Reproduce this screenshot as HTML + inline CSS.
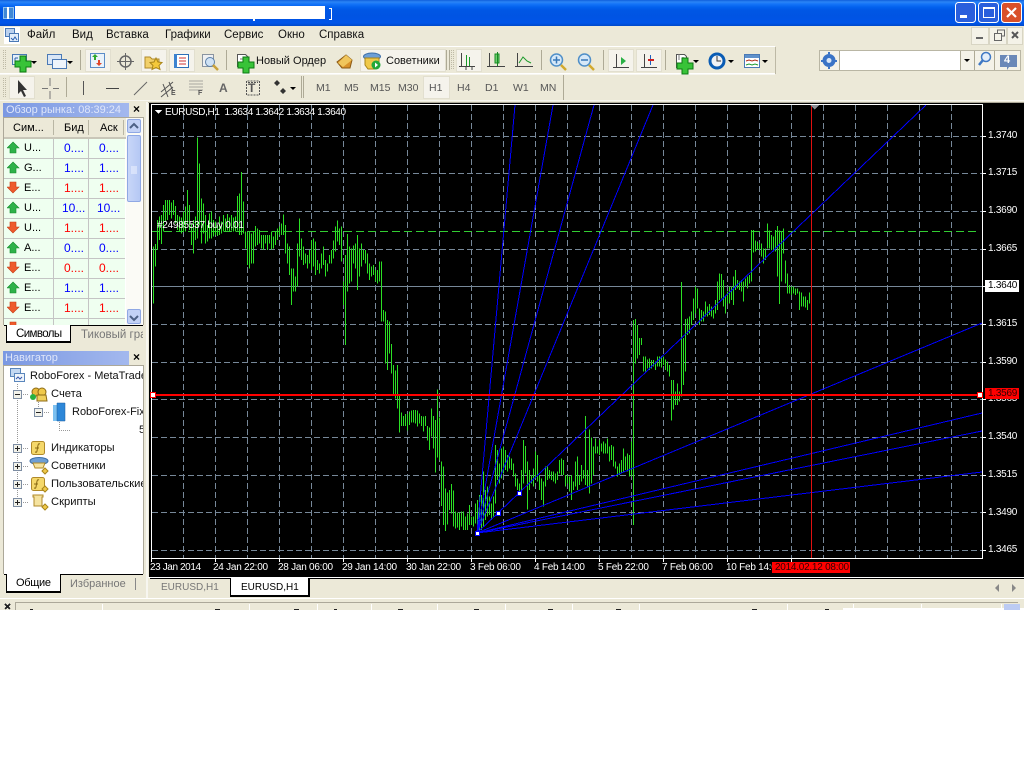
<!DOCTYPE html>
<html><head><meta charset="utf-8"><style>
html,body{margin:0;padding:0;background:#fff;width:1024px;height:768px;overflow:hidden}
body{position:relative;font:11px/13px "Liberation Sans","Noto Sans CJK SC",sans-serif;color:#000}
.a{position:absolute}
.t{position:absolute;white-space:nowrap}
.m{font-size:11.5px;color:#111;top:29px}
.f{font-size:10.5px;color:#555;top:82px}
.r{left:4px;width:121px;height:19px;background:#effff0;border-bottom:1px solid #c4c4c4}
.w{color:#fff;font-size:10px;line-height:12px;letter-spacing:-.25px}
.nv{font-size:11.2px;color:#111;left:51px}
</style></head><body>
<div class="a" style="left:0;top:26px;width:1024px;height:584px;background:#ece9d8"></div>
<div class="a" style="left:0;top:0;width:1024px;height:26px;background:linear-gradient(#0f5fdb 0,#2a85f5 2px,#1474f8 4px,#0362ee 7px,#0057e5 10px,#0054e3 16px,#0055e9 23px,#0049c8 26px)"></div>
<div class="a" style="left:15px;top:6px;width:310px;height:13px;background:#fff"></div>
<div class="a" style="left:3px;top:7px;width:11px;height:12px;background:#3f87d6;border:1px solid #8cc0ee;box-sizing:border-box"></div>
<div class="a" style="left:7px;top:7px;width:2px;height:12px;background:#fff"></div>
<div class="a" style="left:253px;top:17px;width:2px;height:4px;background:#fff"></div>
<div class="a" style="left:329px;top:8px;width:3px;height:12px;border:1px solid #fff;border-left:0;box-sizing:border-box"></div>

<svg class="a" style="left:0;top:0" width="1024" height="104" viewBox="0 0 1024 104">
<defs>
<path id="plus" d="M-3-8h6v5h5v6h-5v5h-6v-5h-5v-6h5z" fill="#38c338" stroke="#0d7a12"/>
<path id="dd" d="M0 0h6l-3 3z" fill="#000"/>
</defs>
<!-- window buttons -->
<g stroke="#fff" stroke-width="1">
<rect x="955.500" y="2.500" width="20" height="20" rx="3" fill="#2a5fdc"/>
<rect x="978.500" y="2.500" width="20" height="20" rx="3" fill="#2a5fdc"/>
<rect x="1001.500" y="2.500" width="20" height="20" rx="3" fill="#d9502a"/>
</g>
<rect x="960" y="15" width="7" height="3" fill="#fff"/>
<path d="M983.500 7.500h11v10h-11zM983.500 8.500h11" stroke="#fff" fill="none"/>
<path d="M1007 8l9 9M1016 8l-9 9" stroke="#fff" stroke-width="2.200"/>
<!-- menu icon -->
<rect x="4" y="27" width="16" height="17" fill="#fff"/>
<rect x="5.500" y="28.500" width="9" height="8" fill="#bcd2ef" stroke="#4a79b5"/>
<rect x="9.500" y="33.500" width="9" height="8" fill="#e3eefa" stroke="#4a79b5"/>
<path d="M11 38l2 2 2-3 2 3" stroke="#2a5fb0" fill="none"/>
<!-- mdi buttons -->
<rect x="971.500" y="27.500" width="17" height="17" fill="#f4f2e8" stroke="#d8d5c4"/>
<rect x="976" y="37" width="7" height="2" fill="#666"/>
<rect x="989.500" y="27.500" width="17" height="17" fill="#f4f2e8" stroke="#d8d5c4"/>
<path d="M994.500 33.500h7v7h-7zM997.500 33v-3h7v6h-3" stroke="#666" fill="none"/>
<rect x="1007.500" y="27.500" width="15" height="17" fill="#f4f2e8" stroke="#d8d5c4"/>
<path d="M1012 32l6 6M1018 32l-6 6" stroke="#555" stroke-width="2"/>
<!-- toolbar edges -->
<path d="M0 46.500h775M0 73.500h775" stroke="#fff"/>
<path d="M775.500 47v27" stroke="#bdb9a5"/>
<path d="M0 100.500h1024" stroke="#f7f6f0"/>
<path d="M0 74.500h775" stroke="#f7f6f0"/>
<path d="M3.500 50v20M5.500 50v20M3.500 78v20M5.500 78v20" stroke="#bdb9a5" stroke-dasharray="1 1"/>
<path d="M80.500 50v20M226.500 50v20M446.500 50v20M449.500 50v20M541.500 50v20M603.500 50v20M665.500 50v20M66.500 77v20M301.500 76v22M303.500 76v22M563.500 75v25" stroke="#aeaa96"/>
<path d="M451.500 50v20M453.500 50v20" stroke="#bdb9a5" stroke-dasharray="1 1"/>
<!-- pressed buttons -->
<g fill="#f5f3ec" stroke="#e2dfcf">
<rect x="85.500" y="49.500" width="25" height="22"/>
<rect x="141.500" y="49.500" width="25" height="22"/>
<rect x="169.500" y="49.500" width="25" height="22"/>
<rect x="360.500" y="49.500" width="85" height="22"/>
<rect x="456.500" y="49.500" width="25" height="22"/>
<rect x="608.500" y="49.500" width="25" height="22"/>
<rect x="636.500" y="49.500" width="25" height="22"/>
<rect x="9.500" y="76.500" width="25" height="22"/>
<rect x="423.500" y="76.500" width="26" height="22"/>
</g>
<!-- new chart -->
<rect x="12.500" y="54.500" width="14" height="10" fill="#e4eefa" stroke="#4a79b5"/>
<path d="M15 58h3M21 61h3M15 58v4M22 57v5" stroke="#2c60a8"/>
<use href="#plus" x="23" y="64"/>
<use href="#dd" x="31" y="61"/>
<!-- profiles -->
<rect x="47.500" y="54.500" width="14" height="10" fill="#d9e6f6" stroke="#4a79b5"/>
<rect x="52.500" y="59.500" width="14" height="9" fill="#eef4fb" stroke="#4a79b5"/>
<use href="#dd" x="67" y="61"/>
<!-- market watch btn -->
<rect x="90.500" y="53.500" width="14" height="14" fill="#eaf2fb" stroke="#5b8cc8"/>
<path d="M95 54l3 3h-2v3h-2v-3h-2z" fill="#2fa82f"/>
<path d="M99 66l3-3h-2v-3h-2v3h-2z" fill="#e0452a"/>
<!-- crosshair -->
<circle cx="125.500" cy="61.500" r="5.500" fill="none" stroke="#666" stroke-width="1.500"/>
<path d="M125.500 53v17M117 61.500h17" stroke="#666"/>
<!-- folder star -->
<path d="M145 57h5l2 2h7v9h-14z" fill="#f2d06a" stroke="#b08a2a"/>
<path d="M156 58l2 4 4 .5-3 3 1 4-4-2-4 2 1-4-3-3 4-.5z" fill="#f5c93a" stroke="#a98518"/>
<!-- navigator -->
<rect x="174.500" y="54.500" width="14" height="13" fill="#fff" stroke="#2c6fb8"/>
<rect x="174" y="54" width="3" height="14" fill="#3c82d0"/>
<path d="M179 58h7M179 61h7M179 64h7" stroke="#c33"/>
<!-- data window -->
<rect x="202.500" y="54.500" width="11" height="12" fill="#eef0f2" stroke="#8a94a0"/>
<circle cx="210" cy="62" r="4.500" fill="#cfe2f5" stroke="#5b7fa8"/>
<path d="M213 65l5 5" stroke="#c9a23a" stroke-width="2.500"/>
<!-- new order -->
<path d="M237.500 54.500h8l3 3v9h-11z" fill="#fff" stroke="#555"/>
<path d="M240 59h5M240 62h4" stroke="#777"/>
<use href="#plus" x="246" y="65"/>
<!-- book -->
<path d="M337 62l9-7 6 5-2 8-8 0z" fill="#d9922a" stroke="#8a5a14"/>
<path d="M346 55l6 5-9 7-5-4z" fill="#f0c65c"/>
<!-- experts -->
<ellipse cx="372" cy="56.500" rx="8.500" ry="3.500" fill="#6d9fd6" stroke="#3d6fa8"/>
<path d="M365 58h14v7l-4 4h-7l-3-4z" fill="#f0c94a" stroke="#a98518"/>
<circle cx="376" cy="65" r="4.500" fill="#23a83a"/>
<path d="M375 62.500l3 2.500-3 2.500z" fill="#fff"/>
<!-- chart types -->
<g stroke="#444" fill="none">
<path d="M461.500 53v14M459 66.500h16"/>
<path d="M466.500 55v11M469.500 57v9" stroke="#1a9a2a"/>
<path d="M466 67v3M472 67v3" />
<path d="M489.500 53v14M487 66.500h18"/>
<path d="M517.500 53v14M515 66.500h18"/>
<path d="M519 63l4-6 4 4 4 2" stroke="#1a9a2a"/>
</g>
<rect x="495" y="54" width="4" height="9" fill="#6fd06f" stroke="#168a22"/>
<path d="M497.500 52v14" stroke="#168a22"/>
<!-- zoom -->
<circle cx="556.500" cy="60" r="6" fill="#d6e8f8" stroke="#4f8fc8" stroke-width="1.500"/>
<path d="M553 60h7M556.500 56.500v7" stroke="#3878b8" stroke-width="1.500"/>
<path d="M561 65l5 5" stroke="#d2a92e" stroke-width="2.500"/>
<circle cx="584.500" cy="60" r="6" fill="#d6e8f8" stroke="#4f8fc8" stroke-width="1.500"/>
<path d="M581 60h7" stroke="#3878b8" stroke-width="1.500"/>
<path d="M589 65l5 5" stroke="#d2a92e" stroke-width="2.500"/>
<g stroke="#444" fill="none">
<path d="M616.500 54v14M613 67.500h16M644.500 54v14M641 67.500h16"/>
</g>
<path d="M621 57l5 4-5 4z" fill="#29b045"/>
<path d="M650.500 55v10" stroke="#2060c0"/><path d="M648 60h6" stroke="#d02020" stroke-width="2"/>
<!-- templates -->
<path d="M676.500 54.500h8l2 2v11h-10z" fill="#fff" stroke="#555"/>
<path d="M679 54v6M683 57v5" stroke="#777"/>
<use href="#plus" x="685" y="66"/>
<use href="#dd" x="693" y="60"/>
<!-- clock -->
<circle cx="717" cy="61" r="7" fill="#f0f2f5" stroke="#0a5cb4" stroke-width="3"/>
<path d="M717 56v5h4" stroke="#333" fill="none"/>
<use href="#dd" x="728" y="60"/>
<!-- indicators -->
<rect x="744.500" y="54.500" width="15" height="13" fill="#fff" stroke="#4a79b5"/>
<rect x="745" y="55" width="14" height="3" fill="#5f91cb"/>
<path d="M746 61l3-1 3 1 3-1 3 1" stroke="#b02d1a" fill="none"/>
<path d="M746 65l3-1 3 1 3-1 3 1" stroke="#1f9a2f" fill="none"/>
<use href="#dd" x="762" y="60"/>
<!-- search box -->
<rect x="819.500" y="50.500" width="201" height="20" fill="#f4f2e8" stroke="#b9b6a4"/>
<rect x="840" y="51" width="120" height="19" fill="#fff"/>
<path d="M839.500 51v19M960.500 51v19M974.500 51v19M994.500 51v19" stroke="#aeaa96"/>
<g fill="#3a73c6"><circle cx="829" cy="60.500" r="6.500"/><path d="M828 52h2v2h-2zM828 67h2v2h-2zM821 60h2v2h-2zM835 60h2v2h-2z"/></g>
<circle cx="829" cy="60.500" r="2.500" fill="#d9e6f6"/>
<use href="#dd" x="964" y="59"/>
<circle cx="986" cy="57" r="4.500" fill="#e4eefa" stroke="#3f78c4" stroke-width="1.500"/>
<path d="M983 60l-4 5" stroke="#3f78c4" stroke-width="2.500"/>
<path d="M1000 55h17v12h-8l-2 3v-3h-7z" fill="#6a88b8"/>
<!-- row 2 tools -->
<path d="M18 80v14l3-3 3 6 2-1-3-6h4z" fill="#333"/>
<path d="M50 78v8M50 91v8M42 88.500h6M53 88.500h6" stroke="#777"/>
<path d="M83.500 81v14" stroke="#555"/>
<path d="M106 88.500h13" stroke="#444"/>
<path d="M134 95l13-13" stroke="#666"/>
<path d="M161 92l12-10M161 97l12-10M163 84l5 13M169 82l4 9" stroke="#555" fill="none"/>
<path d="M189.500 81h14M189.500 84h14M189.500 87h14M189.500 90h14" stroke="#666" stroke-dasharray="1 1"/>
<path d="M248 82.500h10M246.500 81v14h13V81z" fill="none" stroke="#555" stroke-dasharray="2 1"/>
<path d="M274 83l3 3 3-3-3-3zM280 91l3 3 3-3-3-3z" fill="#333"/>
<use href="#dd" x="290" y="87"/>
</svg>

<span class="t m" style="left:27px">Файл</span>
<span class="t m" style="left:72px">Вид</span>
<span class="t m" style="left:106px">Вставка</span>
<span class="t m" style="left:165px">Графики</span>
<span class="t m" style="left:224px">Сервис</span>
<span class="t m" style="left:278px">Окно</span>
<span class="t m" style="left:319px">Справка</span>
<span class="t" style="left:256px;top:55px;color:#111">Новый Ордер</span>
<span class="t" style="left:386px;top:55px;color:#111">Советники</span>
<span class="t" style="left:219px;top:82px;font:bold 12px/13px 'Liberation Sans',sans-serif;color:#666">A</span>
<span class="t" style="left:248px;top:82px;font:bold 12px/13px 'Liberation Sans',sans-serif;color:#555">T</span>
<span class="t" style="left:171px;top:90px;font:bold 7px/8px 'Liberation Sans',sans-serif;color:#555">E</span>
<span class="t" style="left:198px;top:90px;font:bold 7px/8px 'Liberation Sans',sans-serif;color:#555">F</span>
<span class="t f" style="left:316px">M1</span><span class="t f" style="left:344px">M5</span><span class="t f" style="left:370px">M15</span><span class="t f" style="left:398px">M30</span><span class="t f" style="left:429px">H1</span><span class="t f" style="left:457px">H4</span><span class="t f" style="left:485px">D1</span><span class="t f" style="left:513px">W1</span><span class="t f" style="left:540px">MN</span>
<span class="t" style="left:1004px;top:54px;color:#fff;font:bold 11px/13px 'Liberation Sans',sans-serif">4</span>

<!-- Market watch -->
<div class="a" style="left:3px;top:103px;width:126px;height:15px;background:linear-gradient(90deg,#7b98e2,#a3b8ee)"></div>
<span class="t" style="left:6px;top:104px;color:#dfe6fa;font-size:11px">Обзор рынка: 08:39:24</span>
<span class="t" style="left:133px;top:102px;font:bold 12px/14px 'Liberation Sans',sans-serif">×</span>
<div class="a" style="left:3px;top:117px;width:141px;height:208px;background:#fff;border:1px solid #aca899;box-sizing:border-box;border-bottom:0"></div>
<div class="a" style="left:4px;top:118px;width:122px;height:19px;background:#ece9d8"></div>
<div class="a" style="left:4px;top:137px;width:122px;height:2px;background:#c9c6b8"></div>
<div class="a" style="left:53px;top:120px;width:1px;height:15px;background:#b9b6a4"></div>
<div class="a" style="left:88px;top:120px;width:1px;height:15px;background:#b9b6a4"></div>
<div class="a" style="left:123px;top:120px;width:1px;height:15px;background:#b9b6a4"></div>
<span class="t" style="left:13px;top:122px">Сим...</span><span class="t" style="left:64px;top:122px">Бид</span><span class="t" style="left:100px;top:122px">Аск</span>
<div class="a" id="mw" style="left:0;top:0">
<div class="a r" style="top:139px"></div><div class="a r" style="top:159px"></div><div class="a r" style="top:179px"></div><div class="a r" style="top:199px"></div><div class="a r" style="top:219px"></div><div class="a r" style="top:239px"></div><div class="a r" style="top:259px"></div><div class="a r" style="top:279px"></div><div class="a r" style="top:299px"></div><div class="a r" style="top:319px;height:6px;border:0"></div>
</div>
<div class="a" style="left:53px;top:139px;width:1px;height:186px;background:#c4c4c4"></div>
<div class="a" style="left:88px;top:139px;width:1px;height:186px;background:#c4c4c4"></div>
<svg class="a" style="left:7px;top:140px" width="14" height="186" viewBox="0 0 14 186">
<defs><path id="up" d="M6 1l6 6H9v5H3V7H0z" fill="#2fb24a" stroke="#138a2a" stroke-width=".6"/><path id="dn" d="M6 12L0 6h3V1h6v5h3z" fill="#ee5a2c" stroke="#c43a14" stroke-width=".6"/></defs>
<use href="#up" y="1"/><use href="#up" y="21"/><use href="#dn" y="41"/><use href="#up" y="61"/><use href="#dn" y="81"/><use href="#up" y="101"/><use href="#dn" y="121"/><use href="#up" y="141"/><use href="#dn" y="161"/><use href="#dn" y="181"/>
</svg>
<span class="t" style="left:24px;top:142px">U...</span><span class="t" style="left:24px;top:162px">G...</span><span class="t" style="left:24px;top:182px">E...</span><span class="t" style="left:24px;top:202px">U...</span><span class="t" style="left:24px;top:222px">U...</span><span class="t" style="left:24px;top:242px">A...</span><span class="t" style="left:24px;top:262px">E...</span><span class="t" style="left:24px;top:282px">E...</span><span class="t" style="left:24px;top:302px">E...</span>
<div style="color:#00f;font-size:12px">
<span class="t" style="left:64px;top:142px">0....</span><span class="t" style="left:99px;top:142px">0....</span>
<span class="t" style="left:64px;top:162px">1....</span><span class="t" style="left:99px;top:162px">1....</span>
<span class="t" style="left:64px;top:182px;color:#f00">1....</span><span class="t" style="left:99px;top:182px;color:#f00">1....</span>
<span class="t" style="left:62px;top:202px">10...</span><span class="t" style="left:97px;top:202px">10...</span>
<span class="t" style="left:64px;top:222px;color:#f00">1....</span><span class="t" style="left:99px;top:222px;color:#f00">1....</span>
<span class="t" style="left:64px;top:242px">0....</span><span class="t" style="left:99px;top:242px">0....</span>
<span class="t" style="left:64px;top:262px;color:#f00">0....</span><span class="t" style="left:99px;top:262px;color:#f00">0....</span>
<span class="t" style="left:64px;top:282px">1....</span><span class="t" style="left:99px;top:282px">1....</span>
<span class="t" style="left:64px;top:302px;color:#f00">1....</span><span class="t" style="left:99px;top:302px;color:#f00">1....</span>
</div>
<div class="a" style="left:126px;top:118px;width:16px;height:207px;background:#fbfbf6"></div>
<div class="a" style="left:127px;top:119px;width:14px;height:14px;background:#c3d2f6;border:1px solid #8fa8e4;border-radius:2px;box-sizing:border-box"></div>
<div class="a" style="left:127px;top:135px;width:14px;height:67px;background:linear-gradient(90deg,#c8d6f8,#b5c8f4);border:1px solid #8fa8e4;border-radius:2px;box-sizing:border-box"></div>
<div class="a" style="left:127px;top:309px;width:14px;height:15px;background:#c3d2f6;border:1px solid #8fa8e4;border-radius:2px;box-sizing:border-box"></div>
<svg class="a" style="left:127px;top:119px" width="14" height="206" viewBox="0 0 14 206"><path d="M3 9l4-4 4 4M3 197l4 4 4-4" stroke="#4d6185" stroke-width="2" fill="none"/><path d="M4 48h6M4 50h6M4 52h6M4 54h6" stroke="#f0f4ff"/></svg>
<div class="a" style="left:3px;top:325px;width:141px;height:19px;background:#ece9d8"></div>
<div class="a" style="left:4px;top:325px;width:139px;height:1px;background:#000"></div>
<div class="a" style="left:6px;top:325px;width:65px;height:18px;background:#fff;border:1px solid #000;border-top:0;border-bottom-width:2px;box-sizing:border-box"></div>
<span class="t" style="left:16px;top:328px;font-size:11.5px;letter-spacing:-.6px">Символы</span>
<span class="t" style="left:81px;top:329px;color:#777;font-size:11.5px;width:62px;overflow:hidden">Тиковый гра</span>

<!-- Navigator -->
<div class="a" style="left:3px;top:351px;width:126px;height:14px;background:linear-gradient(90deg,#7b98e2,#a3b8ee)"></div>
<span class="t" style="left:5px;top:352px;color:#dfe6fa;font-size:11px">Навигатор</span>
<span class="t" style="left:133px;top:350px;font:bold 12px/14px 'Liberation Sans',sans-serif">×</span>
<div class="a" style="left:3px;top:365px;width:141px;height:209px;background:#fff;border:1px solid #aca899;border-bottom:0;box-sizing:border-box"></div>
<span class="t nv" style="left:30px;top:370px;width:113px;overflow:hidden;font-size:11px">RoboForex - MetaTrader</span>
<span class="t nv" style="top:388px">Счета</span>
<span class="t nv" style="left:72px;top:406px;width:71px;overflow:hidden;font-size:11px">RoboForex-Fix</span>
<span class="t nv" style="left:139px;top:424px;width:4px;overflow:hidden">5</span>
<span class="t nv" style="top:442px">Индикаторы</span>
<span class="t nv" style="top:460px">Советники</span>
<span class="t nv" style="top:478px;width:92px;overflow:hidden">Пользовательские</span>
<span class="t nv" style="top:496px">Скрипты</span>
<svg class="a" style="left:0;top:360px" width="70" height="160" viewBox="0 360 70 160">
<path d="M17.500 384v118M23 394.500h6M23 448.500h6M23 466.500h6M23 484.500h6M23 502.500h6M38.500 400v7M44 412.500h6M59.500 420v10.500h11" stroke="#999" stroke-dasharray="1 1" fill="none"/>
<rect x="10.500" y="368.500" width="10" height="8" fill="#c3d8f2" stroke="#5a86bc"/>
<rect x="14.500" y="373.500" width="10" height="8" fill="#eef4fb" stroke="#5a86bc"/>
<path d="M16 379l2-2 2 2 2-2" stroke="#35a" fill="none"/>
<g fill="#f2f2ea" stroke="#7d8da3">
<rect x="13.500" y="390.500" width="8" height="8"/><rect x="34.500" y="408.500" width="8" height="8"/><rect x="13.500" y="444.500" width="8" height="8"/><rect x="13.500" y="462.500" width="8" height="8"/><rect x="13.500" y="480.500" width="8" height="8"/><rect x="13.500" y="498.500" width="8" height="8"/>
</g>
<path d="M15 394.500h5M36 412.500h5M15 448.500h5M15 466.500h5M15 484.500h5M15 502.500h5M17.500 446v5M17.500 464v5M17.500 482v5M17.500 500v5" stroke="#222"/>
<circle cx="36" cy="392" r="4" fill="#e8b83a" stroke="#8c6a14"/><circle cx="42" cy="392" r="4" fill="#f0c94a" stroke="#8c6a14"/>
<circle cx="33" cy="397" r="3" fill="#27b040"/><path d="M37 395h9l1 6h-10z" fill="#f0cf5a" stroke="#8c6a14"/>
<path d="M53 405h5v16h-5z" fill="#7cc0f0"/><path d="M57 403h8v18h-8z" fill="#2d87d8" stroke="#1d5fa0" stroke-width=".5"/>
<g fill="#f5d86a" stroke="#b08a2a"><rect x="31.500" y="441.500" width="13" height="13" rx="2"/><rect x="31.500" y="477.500" width="13" height="13" rx="2"/></g>
<path d="M40 444c-2-1-2 1-3 7-.5 2-1 1-2 1M35 448h4M39 480c-2-1-2 1-3 7-.5 2-1 1-2 1M34 484h4" stroke="#8a6a14" fill="none"/>
<ellipse cx="39" cy="461" rx="9" ry="3.500" fill="#6d9fd6" stroke="#3d6fa8"/>
<path d="M33 463h12l-2 5h-8z" fill="#f5e3a0" stroke="#b08a2a"/>
<path d="M45 468l3 3-3 3-3-3zM45 486l3 3-3 3-3-3zM45 504l3 3-3 3-3-3z" fill="#f0c94a" stroke="#a98518"/>
<path d="M33 495h10v2h-1v9h-8v-9h-1z" fill="#f5e3a0" stroke="#b08a2a"/>
</svg>
<div class="a" style="left:4px;top:574px;width:139px;height:1px;background:#000"></div>
<div class="a" style="left:6px;top:574px;width:55px;height:19px;background:#fff;border:1px solid #000;border-top:0;border-bottom-width:2px;box-sizing:border-box"></div>
<span class="t" style="left:16px;top:577px;font-size:11px;letter-spacing:-.3px">Общие</span>
<span class="t" style="left:70px;top:578px;color:#777;font-size:11px">Избранное</span>
<div class="a" style="left:135px;top:578px;width:1px;height:12px;background:#888"></div>
<div class="a" style="left:146px;top:102px;width:2px;height:496px;background:#f7f6f0"></div>

<!-- Chart -->
<div class="a" style="left:149px;top:102px;width:875px;height:475px;background:#000"></div>
<div class="a" style="left:148px;top:102px;width:876px;height:1px;background:#aca899"></div>
<svg class="a" style="left:150px;top:103px" width="874" height="474" viewBox="150 103 874 474" shape-rendering="crispEdges">
<defs><clipPath id="cp"><rect x="152" y="105" width="830" height="453"/></clipPath></defs>
<g clip-path="url(#cp)" fill="none">
<path stroke="#778899" stroke-dasharray="6 3" d="M152 136.500H982M152 173.500H982M152 211.500H982M152 249.500H982M152 324.500H982M152 362.500H982M152 399.500H982M152 437.500H982M152 475.500H982M152 512.500H982M152 550.500H982M183.500 105V558M215.500 105V558M247.500 105V558M279.500 105V558M311.500 105V558M343.500 105V558M375.500 105V558M407.500 105V558M439.500 105V558M471.500 105V558M503.500 105V558M535.500 105V558M567.500 105V558M599.500 105V558M631.500 105V558M663.500 105V558M695.500 105V558M727.500 105V558M759.500 105V558M791.500 105V558M823.500 105V558M855.500 105V558M887.500 105V558M919.500 105V558M951.500 105V558"/>
<path stroke="#778899" d="M152 286.500H982"/>
<path stroke="#32cd32" stroke-dasharray="8 4" d="M152 231.500H977"/>
<g stroke="#2be024" stroke-width="3" shape-rendering="crispEdges">
<path transform="translate(150.170 100) scale(.33333)" d="M4 567V620M10 440V610M16 432V500M22 360V450M28 350V420M34 345V432M40 315V395M46 300V365M52 300V360M58 300V345M64 308V355M70 300V345M76 318V370M82 345V390M88 350V395M94 352V400M100 335V395M106 320V395M112 270V370M118 315V390M124 370V435M130 360V460M136 350V420M142 112V415M148 190V375M154 295V430M160 310V400M166 345V430M172 375V425M178 340V415M184 335V415M190 360V410M196 365V405M202 375V408M208 350V405M214 365V400M220 345V395M226 355V395M232 342V392M238 352V395M244 345V392M250 352V395M256 350V395M262 288V392M268 280V405M274 216V405M280 305V400M286 395V445M292 395V495M298 395V505M304 400V490M310 395V490M316 378V440M322 385V435M328 390V430M334 405V445M340 405V450M346 405V430M352 405V450M358 405V430M364 395V448M370 410V445M376 395V435M382 385V420M388 380V405M394 370V405M400 343V405M406 375V460M412 430V490M418 440V525M424 505V615M430 505V575M436 530V575M442 430V560M448 355V470M454 415V480M460 440V495M466 460V490M472 465V505M478 450V490M484 420V510M490 415V500M496 425V525M502 480V510M508 490V520M514 460V505M520 440V495M526 480V530M532 490V515M538 465V490M544 450V490M550 422V475M556 380V455M562 362V425M568 385V435M574 380V485M580 545V615M586 465V735M592 402V575M598 440V550M604 445V545M610 437V490M616 430V505M622 405V570M628 445V530M634 430V500M640 450V480M646 450V490M652 460V520M658 490V540M664 500V530M670 495V525M676 510V545M682 510V550M688 485V545M694 485V665"/>
<path transform="translate(150.170 340) scale(.33333)" d="M700 -90V-55M706 -85V70M712 -60V90M718 -55V40M724 12V100M730 75V165M736 92V175M742 75V205M748 165V278M754 218V258M760 228V258M766 222V258M772 222V272M778 215V255M784 212V248M790 210V248M796 210V250M802 212V260M808 220V250M814 228V258M820 230V275M826 228V258M832 258V302M838 262V330M844 205V290M850 228V325M856 240V398M862 148V352M868 232V360M874 365V498M880 380V555M886 445V573M892 458V553M898 450V510"/>
<path transform="translate(450.170 340) scale(.33333)" d="M4 432V520M10 452V560M16 515V565M22 518V563M28 518V570M34 515V560M40 515V570M46 530V570M52 520V570M58 495V555M64 530V555M70 530V560M76 490V550M82 480V580M88 465V580M94 465V570M100 395V560M106 450V540M112 440V530M118 470V525M124 490V540M130 470V530M136 315V490M142 330V420M148 370V430M154 325V415M160 320V400M166 330V390M172 345V395M178 350V385M184 355V390M190 370V410M196 400V440M202 415V450M208 430V460M214 390V460M220 300V430M226 318V400M232 365V508M238 390V450M244 405V430M250 385V440M256 335V415M262 345V425M268 405V450M274 415V480M280 425V500M286 380V440M292 380V420M298 390V415M304 395V420M310 395V425M316 400V430M322 395V420M328 360V400M334 355V405M340 360V405M346 405V440M352 405V430M358 410V455M364 405V480M370 425V450M376 365V440M382 350V450M388 405V435M394 375V425M400 390V415M406 228V435M412 390V440M418 268V460M424 292V430M430 320V405M436 295V340M442 320V340M448 300V345M454 310V335M460 305V340M466 310V340M472 295V340M478 320V365M484 315V360M490 320V380M496 365V385M502 380V410M508 370V405M514 360V400M520 325V395M526 350V390M532 340V395M538 345V410M544 305V410M550 -60V555M556 -63V70M562 -45V55M568 -6V45M574 -6V15M580 50V95M586 50V95M592 58V85M598 55V90M604 60V85M610 60V80M616 65V90M622 50V80M628 50V80M634 48V82M640 50V75M646 58V90M652 65V95M658 75V110M664 120V242M670 120V208M676 155V195M682 130V195M688 155V185M694 -174V170M700 -6V135M706 -63V95"/>
<path transform="translate(624.170 100) scale(.33333)" d="M190 655V705M196 650V700M202 635V675M208 595V660M214 560V640M220 565V625M226 625V675M232 630V665M238 635V665M244 605V650M250 620V650M256 612V645M262 620V650M268 630V655M274 600V640M280 545V630M286 520V600M292 522V595M298 540V620M304 590V640M310 575V610M316 560V610M322 560V600M328 530V615M334 510V570M340 540V565M346 545V570M352 540V575M358 545V605M364 535V560M370 530V565M376 525V550M382 390V545M388 390V458M394 422V455M400 425V450M406 430V450M412 430V470M418 445V490M424 445V480M430 370V445M436 392V445M442 405V450M448 410V455M454 390V455M460 378V530M466 392V612M472 395V545M478 385V460M484 482V550M490 520V580M496 555V580M502 560V585M508 560V580M514 565V585M520 565V580M526 575V630M532 578V620M538 590V620M544 590V622M550 600V630M556 578V610"/>
</g>
<path stroke="#0000ff" d="M477 533L515 105M477 533L553 105M477 533L594 105M477 533L653 105M477 533L926 105M477 533L982 323M477 533L982 413M477 533L982 431M477 533L982 472"/>
<path stroke="#e01010" d="M811.500 105V558"/>
<path stroke="#f00" stroke-width="2" d="M152 395H982"/>
</g>
<path d="M810 105h9l-4.500 4.500z" fill="#8a8f96"/>
<path d="M151.500 104.500H982.500V558.500H151.500Z" fill="none" stroke="#fff"/>
<path stroke="#fff" d="M983 136.500h3M983 173.500h3M983 211.500h3M983 249.500h3M983 286.500h3M983 324.500h3M983 362.500h3M983 399.500h3M983 437.500h3M983 475.500h3M983 512.500h3M983 550.500h3M151.500 559v3M215.500 559v3M279.500 559v3M343.500 559v3M407.500 559v3M471.500 559v3M535.500 559v3M599.500 559v3M663.500 559v3M727.500 559v3M791.500 559v3"/>
<g fill="#fff"><rect x="150.500" y="392.500" width="5" height="5" stroke="#f00"/><rect x="977.500" y="392.500" width="5" height="5" stroke="#f00"/><rect x="475.500" y="531.500" width="4" height="4" stroke="#00f"/><rect x="496.500" y="511.500" width="4" height="4" stroke="#00f"/><rect x="517.500" y="491.500" width="4" height="4" stroke="#00f"/></g>
<path d="M155 110h7l-3.500 4z" fill="#fff"/>
</svg>
<span class="t w" style="left:165px;top:107px;letter-spacing:-.35px">EURUSD,H1&nbsp; 1.3634 1.3642 1.3634 1.3640</span>
<span class="t w" style="left:157px;top:220px">#24985537 buy 0.01</span>
<span class="t w" style="left:988px;top:130px">1.3740</span><span class="t w" style="left:988px;top:167px">1.3715</span><span class="t w" style="left:988px;top:205px">1.3690</span><span class="t w" style="left:988px;top:243px">1.3665</span><span class="t w" style="left:988px;top:318px">1.3615</span><span class="t w" style="left:988px;top:356px">1.3590</span><span class="t w" style="left:988px;top:431px">1.3540</span><span class="t w" style="left:988px;top:469px">1.3515</span><span class="t w" style="left:988px;top:507px">1.3490</span><span class="t w" style="left:988px;top:544px">1.3465</span>
<span class="t w" style="left:988px;top:393px">1.3565</span>
<div class="a" style="left:985px;top:280px;width:34px;height:12px;background:#fff"></div><span class="t w" style="left:988px;top:280px;color:#000">1.3640</span>
<div class="a" style="left:985px;top:388px;width:34px;height:11px;background:#f00"></div><span class="t w" style="left:988px;top:388px;color:#300">1.3569</span>
<span class="t w" style="left:150px;top:562px;letter-spacing:-.4px">23 Jan 2014</span><span class="t w" style="left:213px;top:562px">24 Jan 22:00</span><span class="t w" style="left:278px;top:562px">28 Jan 06:00</span><span class="t w" style="left:342px;top:562px">29 Jan 14:00</span><span class="t w" style="left:406px;top:562px">30 Jan 22:00</span><span class="t w" style="left:470px;top:562px">3 Feb 06:00</span><span class="t w" style="left:534px;top:562px">4 Feb 14:00</span><span class="t w" style="left:598px;top:562px">5 Feb 22:00</span><span class="t w" style="left:662px;top:562px">7 Feb 06:00</span><span class="t w" style="left:726px;top:562px">10 Feb 14:00</span>
<div class="a" style="left:772px;top:562px;width:78px;height:11px;background:#f00"></div><span class="t w" style="left:775px;top:562px;color:#300">2014.02.12 08:00</span>

<!-- chart tabs -->
<div class="a" style="left:148px;top:577px;width:876px;height:1px;background:#fff"></div>
<div class="a" style="left:150px;top:578px;width:874px;height:1px;background:#000"></div>
<div class="a" style="left:230px;top:578px;width:80px;height:19px;background:#fff;border:1px solid #000;border-top:0;border-bottom-width:2px;border-right-width:2px;box-sizing:border-box"></div>
<span class="t" style="left:161px;top:581px;color:#777;font-size:10px">EURUSD,H1</span>
<span class="t" style="left:241px;top:581px;font-size:10px">EURUSD,H1</span>
<svg class="a" style="left:990px;top:582px" width="30" height="12" viewBox="0 0 30 12"><path d="M9 2v8l-4-4zM22 2v8l4-4z" fill="#888"/></svg>

<!-- toolbox strip -->
<div class="a" style="left:0;top:598px;width:1024px;height:1px;background:#fff"></div>
<div class="a" style="left:15px;top:602px;width:1003px;height:1px;background:#aca899"></div>
<div class="a" style="left:15px;top:602px;width:1px;height:8px;background:#aca899"></div>
<svg class="a" style="left:0;top:602px" width="1024" height="10" viewBox="0 602 1024 10" shape-rendering="crispEdges">
<path stroke="#fff" d="M102.500 604v6M249.500 604v6M317.500 604v6M371.500 604v6M437.500 604v6M505.500 604v6M572.500 604v6M639.500 604v6M787.500 604v6M853.500 604v6M921.500 604v6M1001.500 604v6"/>
<path stroke="#222" d="M30 609.500h3M215 609.500h5M294 609.500h5M334 609.500h3M398 609.500h5M474 609.500h5M548 609.500h5M616 609.500h5M752 609.500h5M825 609.500h4"/>
<path d="M5 604l5 5M10 604l-5 5" stroke="#222" stroke-width="1.500"/>
</svg>
<div class="a" style="left:843px;top:608px;width:181px;height:3px;background:#fff"></div>
<div class="a" style="left:1004px;top:604px;width:16px;height:6px;background:#bccbf3"></div>
<div class="a" style="left:0;top:610px;width:1024px;height:158px;background:#fff"></div>
</body></html>
